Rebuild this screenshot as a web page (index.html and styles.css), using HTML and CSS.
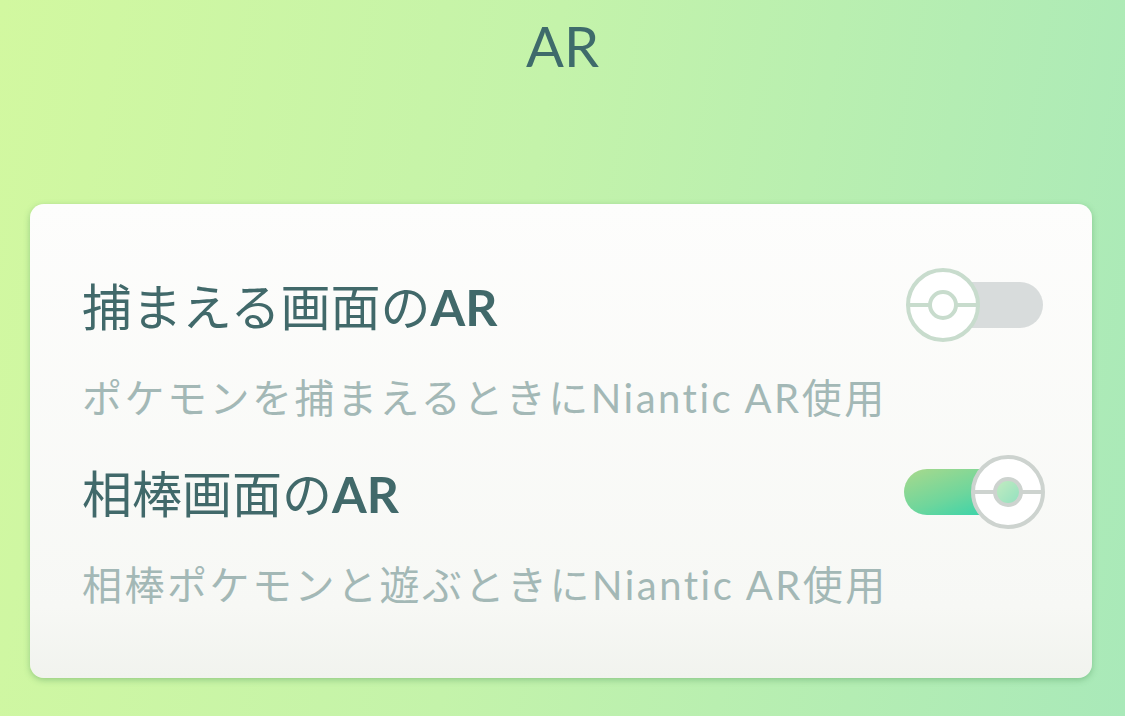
FILE: index.html
```html
<!DOCTYPE html>
<html lang="ja">
<head>
<meta charset="utf-8">
<link rel="stylesheet" href="styles.css">
</head>
<body>
<div class="page">
  <header class="header"><h1 class="title">AR</h1></header>
  <section class="card">
    <div class="setting">
      <div class="row">
        <div class="label">捕まえる画面の<b>AR</b></div>
        <div class="toggle off">
          <div class="track"></div>
          <svg class="knob" viewBox="0 0 76 76" width="76" height="76">
            <circle cx="38" cy="38" r="35" fill="#fff" stroke="#c8dccd" stroke-width="4"/>
            <line x1="3" y1="38" x2="25" y2="38" stroke="#c8dccd" stroke-width="4"/>
            <line x1="51" y1="38" x2="73" y2="38" stroke="#c8dccd" stroke-width="4"/>
            <circle cx="38" cy="38" r="13" fill="#fff" stroke="#c8dccd" stroke-width="4"/>
          </svg>
        </div>
      </div>
      <div class="desc">ポケモンを捕まえるときにNiantic AR使用</div>
    </div>
    <div class="setting">
      <div class="row">
        <div class="label">相棒画面の<b>AR</b></div>
        <div class="toggle on">
          <div class="track"></div>
          <svg class="knob" viewBox="0 0 76 76" width="76" height="76">
            <defs>
              <linearGradient id="ig" x1="0" y1="0" x2="1" y2="1">
                <stop offset="0" stop-color="#c6ecc0"/>
                <stop offset="1" stop-color="#8fe0c0"/>
              </linearGradient>
            </defs>
            <circle cx="38" cy="38" r="35" fill="#fff" stroke="#cdd3cf" stroke-width="4"/>
            <line x1="3" y1="38" x2="25" y2="38" stroke="#cdd3cf" stroke-width="4"/>
            <line x1="51" y1="38" x2="73" y2="38" stroke="#cdd3cf" stroke-width="4"/>
            <circle cx="38" cy="38" r="13" fill="url(#ig)" stroke="#cdd3cf" stroke-width="4"/>
          </svg>
        </div>
      </div>
      <div class="desc">相棒ポケモンと遊ぶときにNiantic AR使用</div>
    </div>
  </section>
</div>
</body>
</html>
```

FILE: styles.css
```css
html, body {
  margin: 0;
  padding: 0;
}
body {
  width: 1125px;
  height: 716px;
  overflow: hidden;
  background: linear-gradient(100deg, #d2f8a0 0%, #c4f3aa 45%, #a9e9b9 100%);
  font-family: Lato, "Noto Sans CJK JP", sans-serif;
}
.page {
  display: flex;
  flex-direction: column;
}
.header {
  height: 204px;
  display: flex;
  justify-content: center;
}
.title {
  margin: 12px 0 0;
  font-size: 56px;
  font-weight: 400;
  color: #3e6b6b;
  line-height: 68px;
}
.card {
  margin: 0 33px 0 30px;
  height: 474px;
  box-sizing: border-box;
  background: linear-gradient(180deg, #fdfdfc 0%, #f7f8f5 85%, #f1f3ee 100%);
  border-radius: 14px;
  box-shadow: 0 2px 6px rgba(80, 150, 90, 0.45);
  padding: 71px 48px 0 52px;
  display: flex;
  flex-direction: column;
  gap: 38px;
}
.setting {
  display: flex;
  flex-direction: column;
}
.row {
  display: flex;
  align-items: center;
  justify-content: space-between;
  height: 60px;
}
.label {
  font-size: 50px;
  color: #41696a;
  line-height: 60px;
  margin-top: 4px;
}
.label b {
  font-weight: 700;
}
.desc {
  margin-top: 37px;
  font-size: 40px;
  color: #a3b8b6;
  line-height: 52px;
  letter-spacing: 2.5px;
}
.toggle {
  position: relative;
  width: 140px;
  height: 76px;
}
.track {
  position: absolute;
  top: 15px;
  height: 46px;
  border-radius: 23px;
}
.off .track {
  left: 8px;
  right: 1px;
  background: #d8dcdc;
}
.on .track {
  left: 0;
  width: 100px;
  background: linear-gradient(160deg, #a9d98c 0%, #6ed69c 55%, #2fd3ad 100%);
}
.knob {
  position: absolute;
  top: 0;
}
.off .knob {
  left: 1px;
}
.on .knob {
  right: -2px;
}
```
